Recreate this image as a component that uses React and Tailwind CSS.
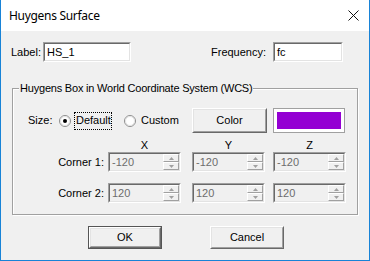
import React from "react";

const sunkenOuter =
  "border border-t-[#a0a0a0] border-l-[#a0a0a0] border-b-white border-r-white";
const sunkenInner =
  "border border-t-[#696969] border-l-[#696969] border-b-[#e3e3e3] border-r-[#e3e3e3]";
const raisedOuter =
  "border border-t-white border-l-white border-b-[#696969] border-r-[#696969]";
const raisedInner =
  "border border-t-[#e3e3e3] border-l-[#e3e3e3] border-b-[#a0a0a0] border-r-[#a0a0a0]";

const TextBox = ({ value, width }) => (
  <div className={`${sunkenOuter} h-[20px] ${width}`}>
    <div className={`${sunkenInner} h-full bg-white flex items-center pl-[2px]`}>
      {value}
    </div>
  </div>
);

const Radio = ({ checked }) => (
  <svg width="12" height="12" viewBox="0 0 12 12">
    <circle cx="6" cy="6" r="5.5" fill="#fff" stroke="#8d8d8d" />
    <circle cx="6" cy="6" r="4.5" fill="none" stroke="#e3e3e3" />
    {checked && <circle cx="6" cy="6" r="2" fill="#000" />}
  </svg>
);

const SpinButton = ({ up }) => (
  <div className="h-[8px] flex items-center justify-center border border-t-white border-l-white border-b-[#a0a0a0] border-r-[#a0a0a0] bg-[#f0f0f0]">
    <svg width="5" height="3" viewBox="0 0 5 3">
      {up ? (
        <path d="M2.5 0 L5 3 L0 3 Z" fill="#a0a0a0" />
      ) : (
        <path d="M0 0 L5 0 L2.5 3 Z" fill="#a0a0a0" />
      )}
    </svg>
  </div>
);

const SpinBox = ({ value, className = "" }) => (
  <div className={`${sunkenOuter} w-[73px] h-[20px] ${className}`}>
    <div className={`${sunkenInner} h-full bg-[#f0f0f0] flex`}>
      <div className="flex-1 flex items-center pl-[2px] text-[#6d6d6d]">{value}</div>
      <div className="w-[16px] flex flex-col">
        <SpinButton up />
        <SpinButton />
      </div>
    </div>
  </div>
);

const Button = ({ children, isDefault, className = "" }) => (
  <div
    className={`w-[74px] h-[23px] ${className} ${
      isDefault ? "border border-[#555]" : ""
    }`}
  >
    <div className={`${raisedOuter} h-full`}>
      <div className={`${raisedInner} h-full flex items-center justify-center bg-[#f0f0f0]`}>
        {children}
      </div>
    </div>
  </div>
);

export default function App() {
  return (
    <div className="w-[370px] h-[261px] bg-[#f0f0f0] border border-t-0 border-[#1883d7] flex flex-col font-['Liberation_Sans',Arial,sans-serif] text-[11px] leading-[13px] text-black">
      <div className="h-[31px] bg-white flex items-center pl-[8px] pr-[10px] shrink-0">
        <span className="font-['Noto_Sans',sans-serif] text-[12px] tracking-[-0.3px]">Huygens Surface</span>
        <svg className="ml-auto" width="11" height="11" viewBox="0 0 11 11">
          <path d="M0.5 0.5 L10.5 10.5 M10.5 0.5 L0.5 10.5" stroke="#111" strokeWidth="1" />
        </svg>
      </div>

      <div className="flex-1">
        <div className="mt-[11px] pl-[10px] flex items-center h-[20px]">
          <span className="w-[32px]">Label:</span>
          <TextBox value="HS_1" width="w-[88px]" />
          <span className="ml-[80px] w-[62px]">Frequency:</span>
          <TextBox value="fc" width="w-[70px]" />
        </div>

        <div className="relative mt-[26px] ml-[11px] w-[346px] h-[127px] border border-[#a0a0a0] shadow-[inset_1px_1px_0_#fff,1px_1px_0_#fff]">
          <span className="absolute left-[6px] -top-[7px] px-[1px] bg-[#f0f0f0] tracking-[-0.2px]">
            Huygens Box in World Coordinate System (WCS)
          </span>

          <div className="mt-[19px] pl-[15px] h-[25px] flex items-center">
            <span className="w-[31px]">Size:</span>
            <span className="w-[13px] flex">
              <Radio checked />
            </span>
            <span className="ml-[2px] w-[38px] h-[18px] border border-dotted border-black flex items-center pl-[1px]">
              Default
            </span>
            <span className="ml-[12px] w-[13px] flex">
              <Radio />
            </span>
            <span className="ml-[4px] w-[51px]">Custom</span>
            <div className="w-[75px] h-[25px]">
              <div className={`${raisedOuter} h-full`}>
                <div className={`${raisedInner} h-full flex items-center justify-center`}>
                  Color
                </div>
              </div>
            </div>
            <div className="ml-[6px] w-[72px] h-[25px] border border-[#a0a0a0] bg-white p-[2px]">
              <div className="h-full bg-[#9400d3] border border-white"></div>
            </div>
          </div>

          <div className="h-[19px] flex items-end pl-[95px]">
            <span className="w-[73px] text-center">X</span>
            <span className="ml-[11px] w-[73px] text-center">Y</span>
            <span className="ml-[8px] w-[73px] text-center">Z</span>
          </div>

          <div className="flex items-center h-[20px]">
            <span className="w-[91px] text-right">Corner 1:</span>
            <SpinBox value="-120" className="ml-[4px]" />
            <SpinBox value="-120" className="ml-[11px]" />
            <SpinBox value="-120" className="ml-[8px]" />
          </div>

          <div className="mt-[11px] flex items-center h-[20px]">
            <span className="w-[91px] text-right">Corner 2:</span>
            <SpinBox value="120" className="ml-[4px]" />
            <SpinBox value="120" className="ml-[11px]" />
            <SpinBox value="120" className="ml-[8px]" />
          </div>
        </div>

        <div className="mt-[11px] flex">
          <Button isDefault className="ml-[87px]">OK</Button>
          <Button className="ml-[48px]">Cancel</Button>
        </div>
      </div>
    </div>
  );
}
